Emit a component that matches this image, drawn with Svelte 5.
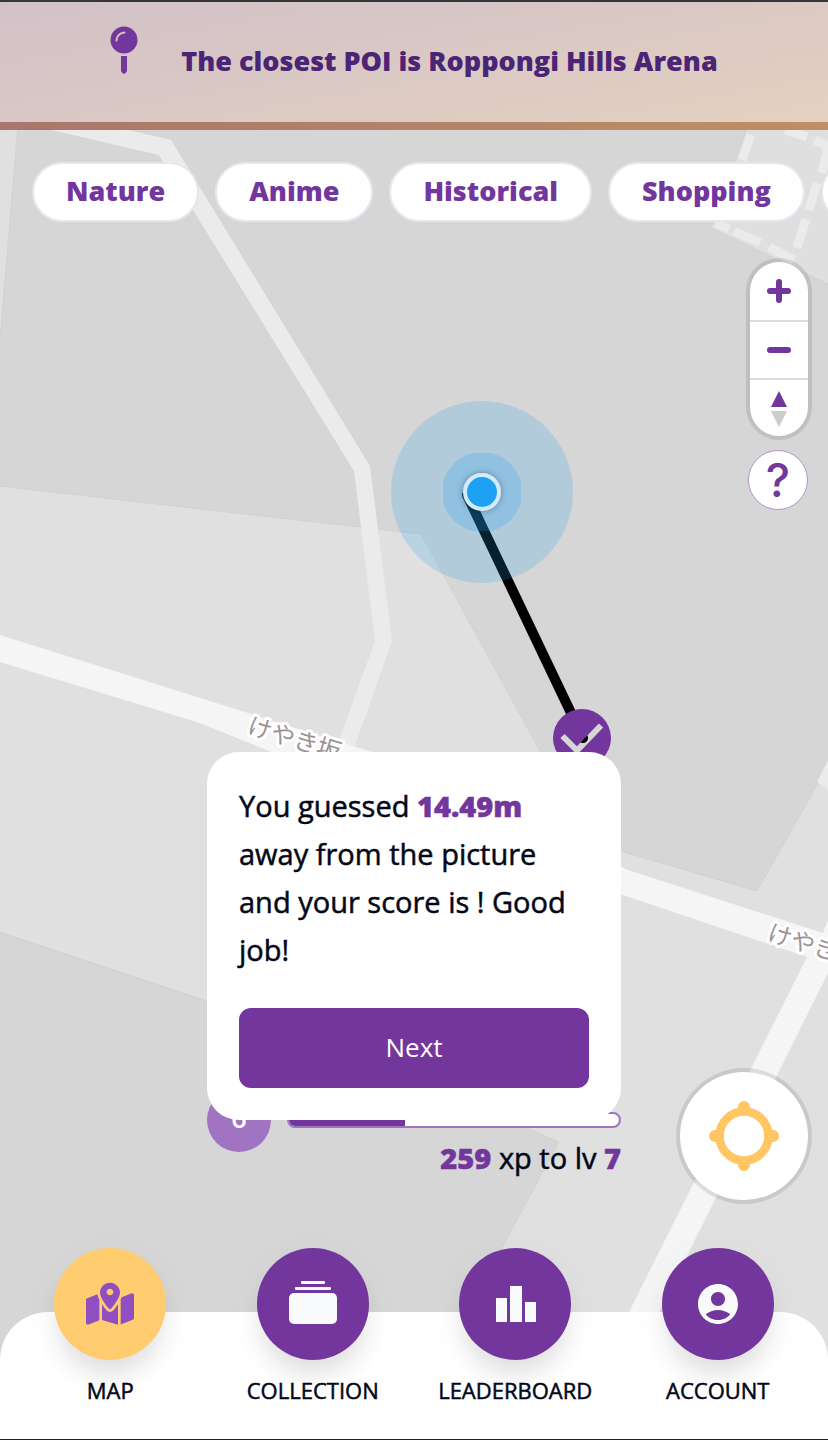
<script>
  const categories = ['Nature', 'Anime', 'Historical', 'Shopping', 'Restaurant'];
  const tabs = [
    { id: 'map', label: 'MAP', active: true },
    { id: 'collection', label: 'COLLECTION' },
    { id: 'leaderboard', label: 'LEADERBOARD' },
    { id: 'account', label: 'ACCOUNT' }
  ];
  const level = 6;
  const xpLeft = 259;
  const progress = 35;
</script>

<div class="app">
  <svg class="map" viewBox="0 0 828 1440" preserveAspectRatio="xMidYMin slice" aria-hidden="true">
    <defs>
      <mask id="check-cut">
        <rect x="540" y="700" width="90" height="90" fill="#fff" />
        <path d="M562.500 736 577 750.500 601 725.500" fill="none" stroke="#000" stroke-width="6" />
      </mask>
      <clipPath id="pulse-box"><rect x="443" y="453" width="78" height="78" /></clipPath>
      <filter id="dot-shadow" x="-50%" y="-50%" width="200%" height="200%">
        <feDropShadow dx="0" dy="0" stdDeviation="3" flood-color="#000" flood-opacity="0.35" />
      </filter>
    </defs>
    <rect width="828" height="1440" fill="#e0e0e0" />
    <path d="M748 125 711 228 830 285V125Z" fill="#dfdfdf" />
    <g fill="#d6d6d6" stroke="#d1d1d1" stroke-width="1">
      <path d="M18 125-1 352V486L421 534 590 842 757 891 830 762V285L711 228 748 125Z" />
      <path d="M-1 932 207 1001 527 1128 559 1142 467 1312V1441H-1Z" />
    </g>
    <path d="M30 125 108 125 171 140 370 466 392 641 352 754 334 754 375 641 354 471 159 155Z" fill="#ebebeb" />
    <path d="M828 760 817 782 828 790Z" fill="#ebebeb" />
    <g fill="none" stroke="#ebebeb" stroke-width="9">
      <path d="M751 135 742 160" />
      <path d="M738 172 729 198" />
      <path d="M716 223 729 229M734 231 760 243M769 247 794 260" />
      <path d="M785 130 807 137M815 140 830 148" />
      <path d="M828 148 822 173M817 183 809 210M806 219 797 248" />
    </g>
    <path d="M0 635 372 752 628 870 823 933 828 920V973L658 1314H628L807 957 620 894 200 723 0 662Z" fill="#f5f5f5" />
    <g class="street">
      <text transform="translate(246 733) rotate(17)">けやき坂</text>
      <text transform="translate(766 940) rotate(17)">けやき坂</text>
    </g>
    <path d="M467 495 583 738" stroke="#000" stroke-width="10" stroke-linecap="round" />
    <circle cx="482" cy="492" r="91" fill="#1da1f2" opacity="0.2" />
    <circle cx="482" cy="492" r="40" fill="#1da1f2" opacity="0.22" clip-path="url(#pulse-box)" />
    <circle cx="482" cy="492" r="19" fill="#d5eafb" filter="url(#dot-shadow)" />
    <circle cx="482" cy="492" r="15" fill="#1da1f2" />
    <circle cx="582" cy="738" r="29" fill="#72369d" mask="url(#check-cut)" />
  </svg>

  <header>
    <svg class="pin" viewBox="0 0 28 72" aria-hidden="true">
      <circle cx="14" cy="14" r="13.500" fill="#72369d" />
      <path d="M6.500 14.500A8 8 0 0 1 14.500 6.500" fill="none" stroke="#d7c5c6" stroke-width="2" stroke-linecap="round" />
      <path d="M11 30H17V45Q15.500 48 14 48T11 45Z" fill="#72369d" />
    </svg>
    <h1>The closest POI is Roppongi Hills Arena</h1>
  </header>

  <div class="chips">
    {#each categories as name}
      <button type="button">{name}</button>
    {/each}
  </div>

  <div class="controls">
    <div class="zoom">
      <button type="button" aria-label="Zoom in">
        <svg viewBox="0 0 58 58"><path d="M29 20V38M20 29H38" stroke="#72369d" stroke-width="6" stroke-linecap="round" /></svg>
      </button>
      <button type="button" aria-label="Zoom out">
        <svg viewBox="0 0 58 58"><path d="M20 28H38" stroke="#72369d" stroke-width="6" stroke-linecap="round" /></svg>
      </button>
      <button type="button" aria-label="Reset bearing to north">
        <svg viewBox="0 0 58 58"><path d="M29 11 37 27H21Z" fill="#72369d" /><path d="M29 47 37 31H21Z" fill="#ccc" /></svg>
      </button>
    </div>
    <button type="button" class="help" aria-label="Help">?</button>
  </div>

  <section class="status">
    <div class="xp">
      <div class="level">{level}</div>
      <div class="progress">
        <div class="bar" role="progressbar" aria-label="Experience" aria-valuenow={progress} aria-valuemin="0" aria-valuemax="100">
          <div class="fill" style="width: {progress}%"></div>
        </div>
        <p><strong>{xpLeft}</strong> xp to lv <strong>{level + 1}</strong></p>
      </div>
      <div class="result" role="dialog" aria-label="Guess result">
        <p>You guessed <strong>14.49m</strong> away from the picture and your score is ! Good job!</p>
        <button type="button">Next</button>
      </div>
    </div>
    <button type="button" class="locate" aria-label="Find my location">
      <svg viewBox="0 0 72 72">
        <circle cx="36" cy="36" r="24.500" fill="none" stroke="#ffc663" stroke-width="8.500" />
        <path d="M36 7V8M36 64V65M7 36H8M64 36H65" stroke="#ffc663" stroke-width="12" stroke-linecap="round" />
      </svg>
    </button>
  </section>

  <nav>
    {#each tabs as tab}
      <a href="#{tab.id}" class:active={tab.active}>
        <span class="disc">
          {#if tab.id === 'map'}
            <svg viewBox="0 0 576 512" fill="currentColor"><path d="M408 120C408 174.600 334.900 271.900 302.800 311.100C295.100 321.600 280.900 321.600 273.200 311.100C241.100 271.900 168 174.600 168 120C168 53.730 221.700 0 288 0C354.300 0 408 53.730 408 120zM288 152C310.100 152 328 134.100 328 112C328 89.910 310.100 72 288 72C265.900 72 248 89.910 248 112C248 134.100 265.900 152 288 152zM425.600 179.800C426.100 178.600 426.600 177.400 427.100 176.100L543.100 129.700C558.900 123.400 576 135 576 152V422.800C576 432.600 570 441.400 560.900 445.100L416 503V200.400C419.500 193.500 422.700 186.700 425.600 179.800zM150.400 179.800C153.300 186.700 156.500 193.500 160 200.400V451.800L32.910 502.700C17.150 508.100 0 497.400 0 480.400V209.600C0 199.800 5.975 190.100 15.090 187.300L137.600 138.300C140 152.500 144.900 166.600 150.400 179.800zM327.800 331.100C341.700 314.600 363.500 286.300 384 255V504.300L192 449.400V255C212.500 286.300 234.300 314.600 248.200 331.100C268.700 357.600 307.300 357.600 327.800 331.100z" /></svg>
          {:else if tab.id === 'collection'}
            <svg viewBox="0 0 48 48" fill="currentColor"><rect y="13" width="48" height="31" rx="5" /><rect x="6" y="7" width="36" height="3" rx="1" /><rect x="12" y="1" width="24" height="3" rx="1" /></svg>
          {:else if tab.id === 'leaderboard'}
            <svg viewBox="0 0 48 48" fill="currentColor"><path d="M5 18H16V42H5ZM19 6H31V42H19ZM34 22H45V42H34Z" /></svg>
          {:else}
            <svg viewBox="0 0 24 24" fill="currentColor"><path d="M12 2C6.480 2 2 6.480 2 12s4.480 10 10 10 10-4.480 10-10S17.520 2 12 2zm0 4c1.930 0 3.500 1.570 3.500 3.500S13.930 13 12 13s-3.500-1.570-3.500-3.500S10.070 6 12 6zm0 14c-2.030 0-4.430-.820-6.140-2.880C7.550 15.800 9.680 15 12 15s4.450.800 6.140 2.120C16.430 19.180 14.030 20 12 20z" /></svg>
          {/if}
        </span>
        <span class="label">{tab.label}</span>
      </a>
    {/each}
  </nav>
</div>

<style>
  .app {
    --purple: #72369d;
    position: relative;
    box-sizing: border-box;
    min-height: 100vh;
    display: flex;
    flex-direction: column;
    overflow: hidden;
    border-top: 2px solid #35353a;
    border-bottom: 1px solid #222;
    background: #e0e0e0;
    color: #020817;
    font-family: 'Open Sans', 'Noto Sans', sans-serif;
    font-weight: 500;
  }
  .app > :not(.map) {
    position: relative;
  }
  .map {
    position: absolute;
    top: -2px;
    left: 0;
    width: 100%;
    height: calc(100% + 3px);
  }
  .street {
    font-family: 'Noto Sans CJK JP', sans-serif;
    font-size: 24px;
    font-weight: 400;
    fill: #9b9393;
    stroke: #fff;
    stroke-width: 6px;
    stroke-linejoin: round;
    paint-order: stroke;
  }
  button {
    font: inherit;
    padding: 0;
    border: 0;
    cursor: pointer;
  }
  p,
  h1 {
    margin: 0;
  }
  strong {
    color: var(--purple);
    font-weight: 800;
  }
  svg {
    display: block;
  }
  header {
    display: flex;
    align-items: center;
    justify-content: center;
    gap: 43px;
    min-height: 120px;
    padding: 0 16px;
    background: linear-gradient(170deg, #d2c1c8, #d8c6c6 35%, #e3d1c0);
    border-bottom: 8px solid;
    border-image: linear-gradient(90deg, #a8776c, #bf8e65) 1;
    border-width: 0 0 8px;
  }
  .pin {
    flex: none;
    width: 28px;
    height: 72px;
  }
  h1 {
    padding-bottom: 2px;
    font-size: 27px;
    line-height: 40px;
    font-weight: 800;
    color: #4a2475;
  }
  .chips {
    display: flex;
    gap: 16px;
    margin-top: 32px;
    padding: 0 32px;
    overflow: hidden;
  }
  .chips button {
    flex: none;
    box-sizing: border-box;
    height: 60px;
    padding: 0 32px 2px;
    border: 2px solid #e2e8f0;
    border-radius: 30px;
    background: #fff;
    color: var(--purple);
    font-size: 27px;
    font-weight: 800;
    line-height: 40px;
  }
  .controls {
    display: flex;
    flex-direction: column;
    align-items: flex-end;
    gap: 14px;
    margin-top: 40px;
    padding: 0 20px;
  }
  .zoom {
    display: flex;
    flex-direction: column;
    overflow: hidden;
    border-radius: 29px;
    background: #fff;
    box-shadow: 0 0 0 4px rgba(0, 0, 0, 0.1);
  }
  .zoom button {
    display: grid;
    place-items: center;
    box-sizing: border-box;
    width: 58px;
    height: 58px;
    background: none;
  }
  .zoom button + button {
    border-top: 2px solid #ddd;
  }
  .zoom svg {
    width: 58px;
    height: 58px;
  }
  .help {
    box-sizing: border-box;
    width: 60px;
    height: 60px;
    border: 1px solid #b492cd;
    border-radius: 50%;
    background: #fff;
    color: var(--purple);
    font-family: Inter, sans-serif;
    font-size: 46px;
    font-weight: 500;
    line-height: 56px;
  }
  .status {
    display: grid;
    grid-template-columns: 1fr 2fr 1fr;
    align-items: center;
    margin-top: auto;
    padding-bottom: 48px;
  }
  .xp {
    position: relative;
    grid-column: 2;
    display: flex;
    align-items: flex-start;
    gap: 16px;
  }
  .level {
    flex: none;
    width: 64px;
    height: 64px;
    border-radius: 50%;
    background: #a173c3;
    color: #fff;
    font-size: 27px;
    font-weight: 600;
    line-height: 60px;
    text-align: center;
  }
  .progress {
    flex: 1;
    padding: 24px 0 4px;
  }
  .bar {
    box-sizing: border-box;
    height: 16px;
    overflow: hidden;
    border: 2px solid #a173c3;
    border-radius: 8px;
    background: #fff;
  }
  .fill {
    height: 100%;
    background: var(--purple);
  }
  .progress p,
  .result p {
    font-size: 29px;
    -webkit-text-stroke: 0.5px;
  }
  .progress p {
    margin-top: 8px;
    line-height: 44px;
    text-align: right;
  }
  .result {
    position: absolute;
    left: 0;
    right: 0;
    bottom: calc(100% - 32px);
    display: flex;
    flex-direction: column;
    gap: 34px;
    padding: 30px 32px 32px;
    border-radius: 32px;
    background: #fff;
  }
  .result p {
    line-height: 48px;
  }
  .result button {
    height: 80px;
    padding-bottom: 2px;
    border-radius: 12px;
    background: var(--purple);
    color: #fff;
    font-size: 26px;
    font-weight: 400;
  }
  .locate {
    grid-column: 3;
    justify-self: end;
    display: grid;
    place-items: center;
    width: 128px;
    height: 128px;
    margin-right: 20px;
    border-radius: 50%;
    background: #fff;
    box-shadow: 0 0 0 4px rgba(0, 0, 0, 0.1);
  }
  .locate svg {
    width: 72px;
    height: 72px;
  }
  nav {
    display: grid;
    grid-template-columns: repeat(4, 1fr);
    padding: 0 9px 33px;
  }
  nav::before {
    content: '';
    position: absolute;
    inset: 64px 0 0;
    border-radius: 48px 48px 0 0;
    background: #fff;
  }
  nav a {
    position: relative;
    display: flex;
    flex-direction: column;
    align-items: center;
    gap: 14px;
    color: inherit;
    text-decoration: none;
  }
  .disc {
    display: grid;
    place-items: center;
    width: 112px;
    height: 112px;
    border-radius: 50%;
    background: var(--purple);
    color: #f8fafc;
    box-shadow: 0 20px 25px -5px rgba(0, 0, 0, 0.1), 0 8px 40px rgba(0, 0, 0, 0.04);
  }
  .active .disc {
    background: #ffcc70;
    color: #914ec0;
  }
  .disc svg {
    width: 48px;
    height: 48px;
  }
  .label {
    font-size: 22px;
    line-height: 32px;
    -webkit-text-stroke: 0.5px;
  }
</style>
